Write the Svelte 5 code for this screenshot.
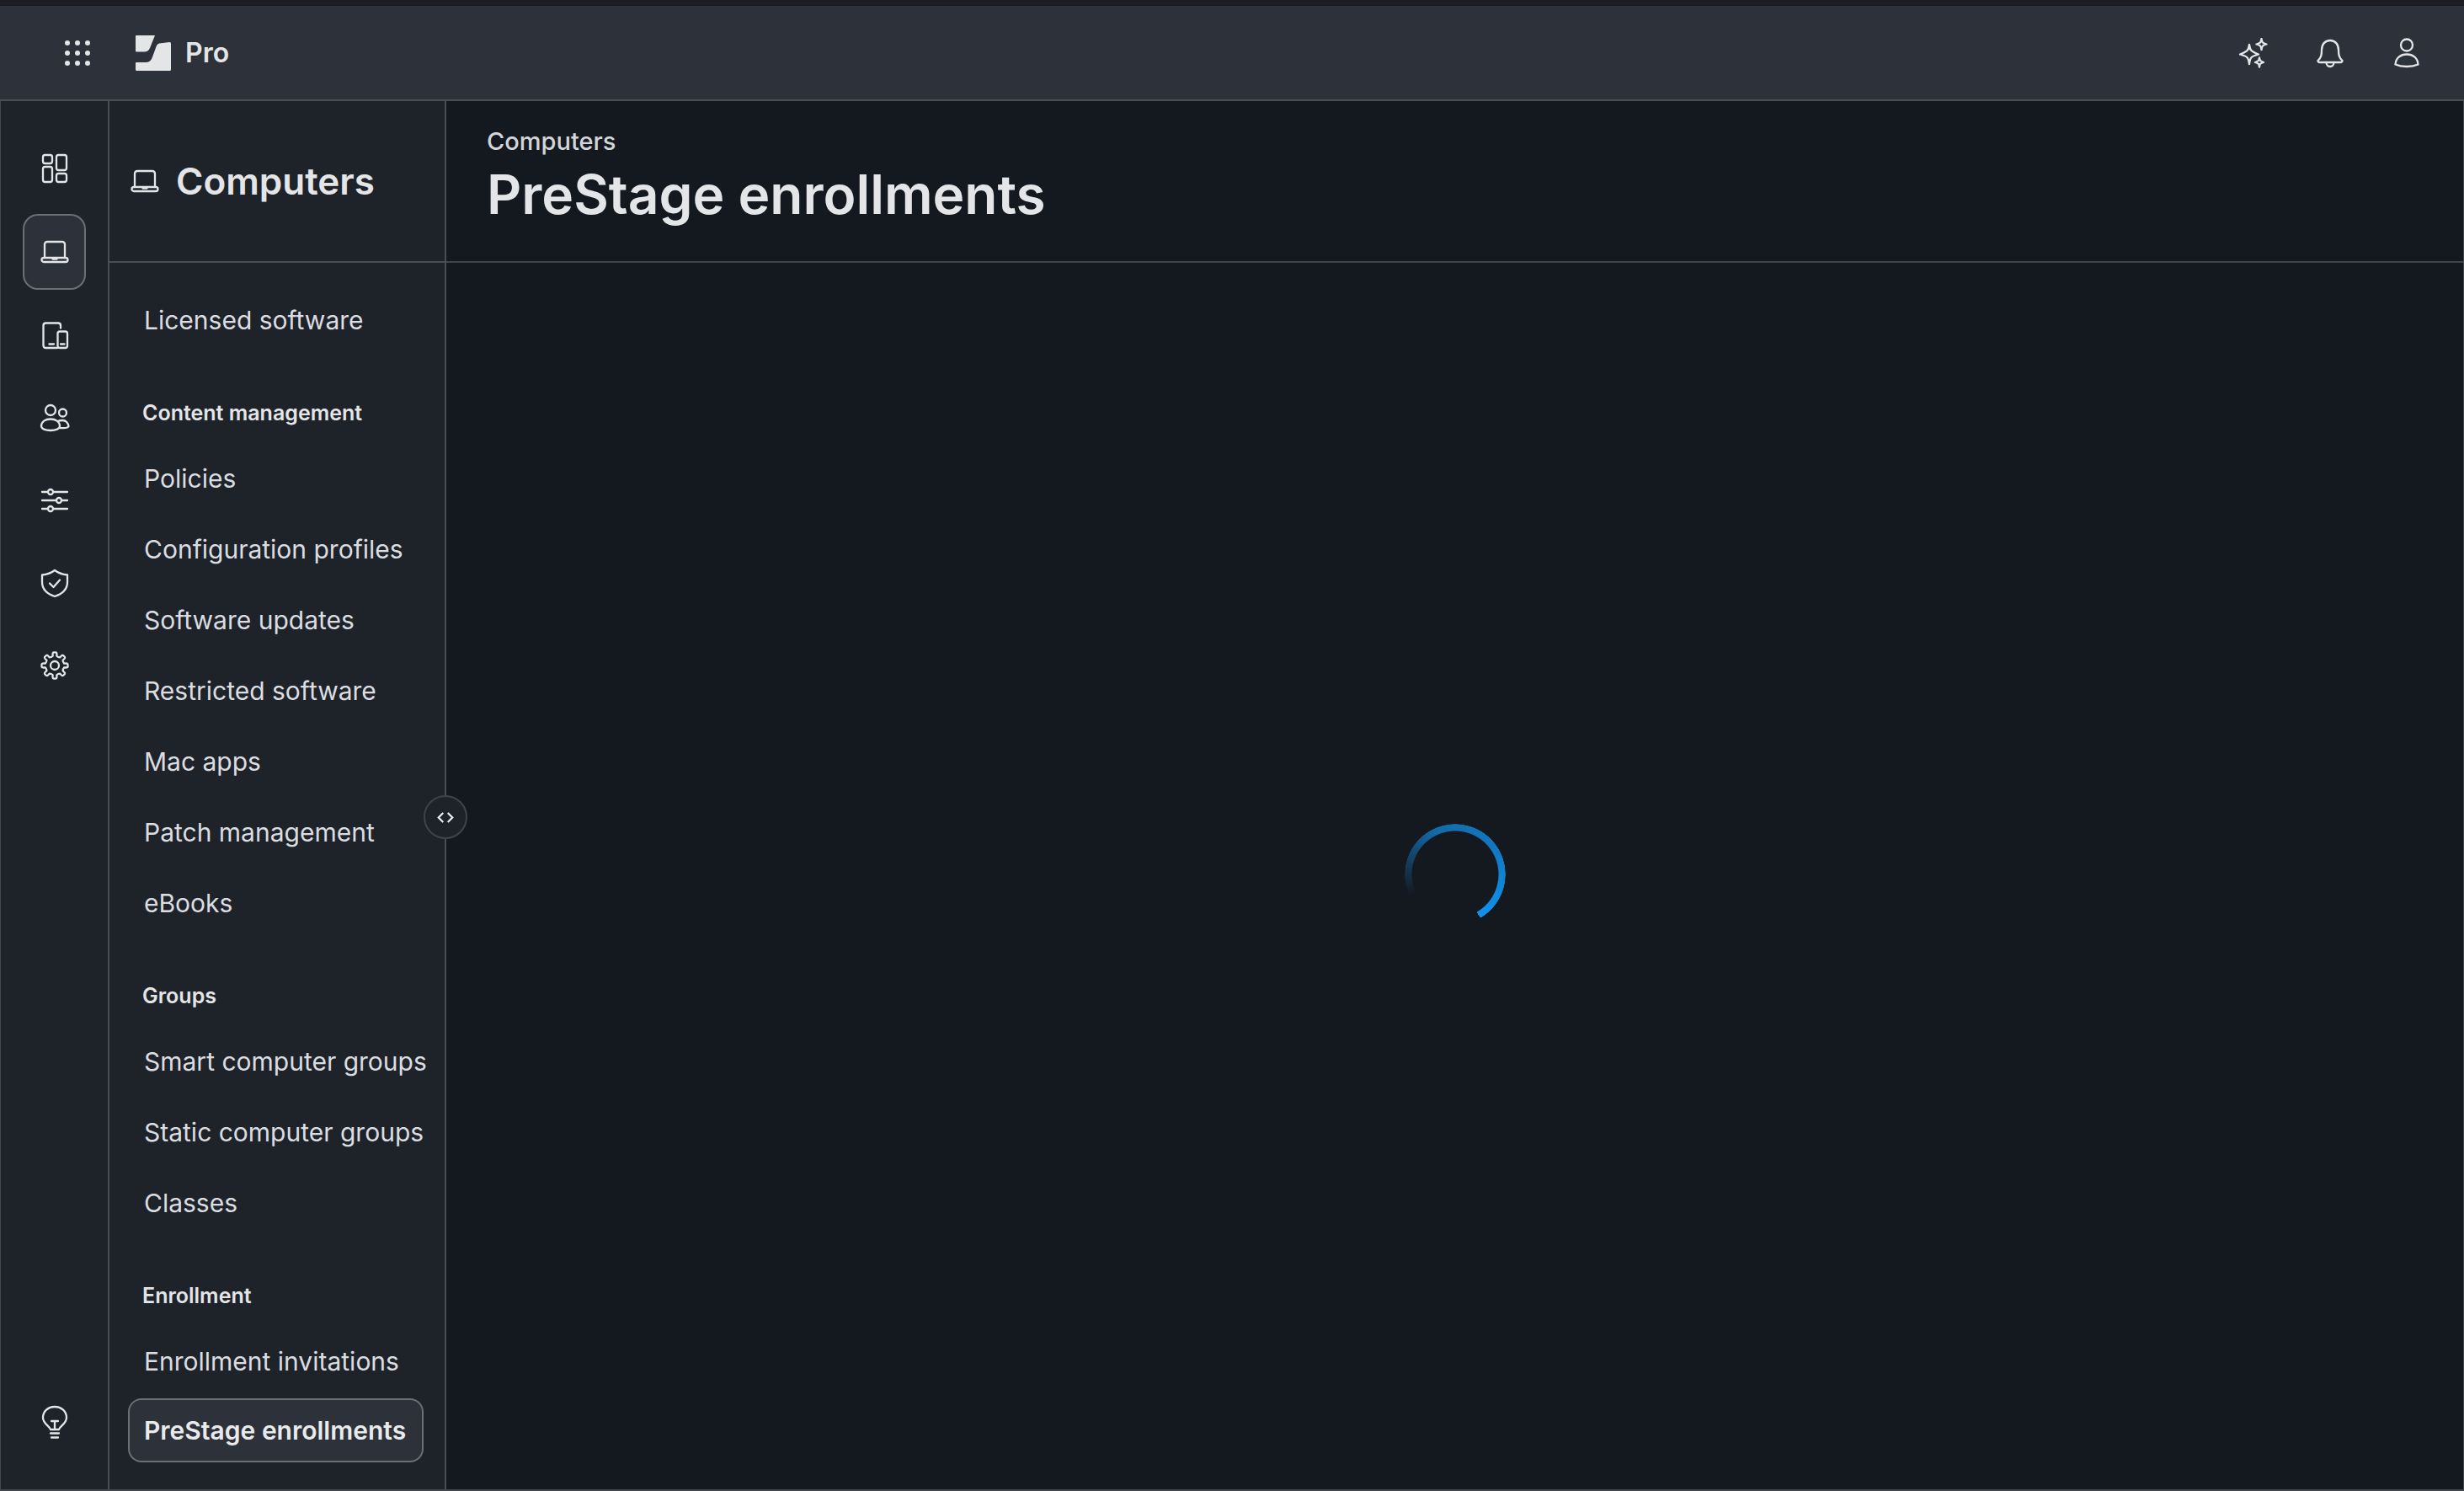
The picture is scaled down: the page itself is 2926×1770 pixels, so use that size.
<script lang="ts">
  const groups = [
    { items: ['Licensed software'] },
    { label: 'Content management', items: ['Policies', 'Configuration profiles', 'Software updates', 'Restricted software', 'Mac apps', 'Patch management', 'eBooks'] },
    { label: 'Groups', items: ['Smart computer groups', 'Static computer groups', 'Classes'] },
    { label: 'Enrollment', items: ['Enrollment invitations', 'PreStage enrollments'] },
  ];
  const active = 'PreStage enrollments';

  function gearPath(cx: number, cy: number, teeth: number, outer: number, inner: number) {
    const step = (Math.PI * 2) / teeth;
    const pt = (r: number, a: number) => `${(cx + r * Math.sin(a)).toFixed(2)} ${(cy - r * Math.cos(a)).toFixed(2)}`;
    let d = '';
    for (let i = 0; i < teeth; i++) {
      const a = i * step;
      d += `${i ? 'L' : 'M'} ${pt(inner, a - step * 0.26)} `;
      d += `Q ${pt(outer + 1.2, a - step * 0.24)} ${pt(outer, a)} Q ${pt(outer + 1.2, a + step * 0.24)} ${pt(inner, a + step * 0.26)} `;
      d += `Q ${pt(inner - 1, a + step * 0.5)} ${pt(inner, a + step * 0.74)} `;
    }
    return d + 'Z';
  }
</script>

{#snippet laptop()}
  <svg class="icon" viewBox="0 0 36 36">
    <path d="M6 25V9a3 3 0 0 1 3-3h18a3 3 0 0 1 3 3v16" />
    <rect x="2.5" y="25" width="31" height="5" rx="2.5" />
    <path d="M15.5 26.5h5" />
  </svg>
{/snippet}

<div class="app">
  <div class="strip"></div>
  <header class="topbar">
    <svg class="dots" viewBox="0 0 36 36" fill="currentColor">
      {#each [6, 18, 30] as y}
        {#each [6, 18, 30] as x}
          <circle cx={x} cy={y} r="3" />
        {/each}
      {/each}
    </svg>
    <svg class="logo" viewBox="0 0 42 42" fill="currentColor">
      <path d="M1 0H23L17 15Q15.500 19 11 19.500H1Q0 19.500 0 18.500V1Q0 0 1 0Z" />
      <path d="M28 9.500L40.500 8Q42 8 42 9.500V40.500Q42 42 40.500 42H1.500Q0 42 0 40.500V33Q0 32 1 32H12Q17.500 32 19.500 27L25 12Q26 10 28 9.500Z" />
    </svg>
    <span class="product">Pro</span>
    <div class="top-actions">
      <svg class="icon" viewBox="0 0 36 36">
        <path d="M13 8C14 15 15 16 24 19.500C15 22 14 23 13 31C12 23 11 22 2 19.500C11 16 12 15 13 8Z" />
        <path d="M27.500 1C28 5.500 29 6.500 33.500 7.500C29 8.500 28 9.500 27.500 14C27 9.500 26 8.500 21.500 7.500C26 6.500 27 5.500 27.500 1Z" />
        <path d="M25 23.500C25.500 27 26 27.500 30 29C26 30 25.500 31 25 34.500C24.500 31 24 30 20 29C24 27.500 24.500 27 25 23.500Z" />
      </svg>
      <svg class="icon" viewBox="0 0 36 36">
        <path d="M3.500 27C7.500 23 8 20 8 14.500C8 7.500 12 3 18 3C24 3 28 7.500 28 14.500C28 20 28.500 23 32.500 27C32.500 28 31.500 29 30 29H6C4.500 29 3.500 28 3.500 27Z" />
        <path d="M13.500 29C13.500 32 15.500 34 18 34C20.500 34 22.500 32 22.500 29" />
      </svg>
      <svg class="icon" viewBox="0 0 36 36">
        <circle cx="18" cy="8.500" r="7" />
        <path d="M4.500 31.500C5 24 10.500 19.500 18 19.500C25.500 19.500 31 24 31.500 31.500C27 33.500 23 34 18 34C13 34 9 33.500 4.500 31.500Z" />
      </svg>
    </div>
  </header>

  <div class="body">
    <nav class="rail">
      <svg class="icon" viewBox="0 0 36 36">
        <rect x="4" y="2" width="11" height="10" rx="2.500" />
        <rect x="4" y="16" width="11" height="18" rx="2.500" />
        <rect x="20" y="2" width="12" height="18" rx="2.500" />
        <rect x="20" y="24" width="12" height="10" rx="2.500" />
      </svg>
      <div class="rail-active">{@render laptop()}</div>
      <svg class="icon" viewBox="0 0 36 36">
        <path d="M25 9.500V6.500Q25 3.500 22 3.500H7.500Q4.500 3.500 4.500 6.500V30Q4.500 33 7.500 33H21" />
        <rect x="21.500" y="13.500" width="11.500" height="19.500" rx="2.500" />
        <path d="M11.500 28.500H17M25 28.500H29.500" />
      </svg>
      <svg class="icon" viewBox="0 0 36 36">
        <circle cx="13" cy="9" r="6" />
        <circle cx="27.500" cy="12" r="4.500" />
        <path d="M2 28C2 22.500 7 19.500 13 19.500C19 19.500 24 22.500 24 28C24 31 19 33 13 33C7 33 2 31 2 28Z" />
        <path d="M22 22C23.500 21 25.500 21 27.500 21C31 21 34 24 34.500 28C34 30 30 30.500 24 30" />
      </svg>
      <svg class="icon sliders" viewBox="0 0 36 36">
        <path d="M3 8H33M3 18H33M3 28H33" />
        <circle cx="13" cy="8" r="3" />
        <circle cx="23" cy="18" r="3" />
        <circle cx="13" cy="28" r="3" />
      </svg>
      <svg class="icon" viewBox="0 0 36 36">
        <path d="M18 3C22 6 27 8 33 8.500V17C33 25 27 31 18 34C9 31 3 25 3 17V8.500C9 8 14 6 18 3Z" />
        <path d="M12 18.500L16.500 23L24 14.500" />
      </svg>
      <svg class="icon" viewBox="0 0 36 36">
        <path d={gearPath(18, 18, 8, 15.5, 11.5)} />
        <circle cx="18" cy="18" r="5" />
      </svg>
      <svg class="icon bulb" viewBox="0 0 36 42">
        <path d="M13 29C12 25 4 22 4 15C4 7.500 10 2 18 2C26 2 32 7.500 32 15C32 22 24 25 23 29Z" />
        <path d="M14 19H22M18 19V29M13 33.500H23M14 38.500H22" />
      </svg>
    </nav>

    <aside class="panel">
      <div class="panel-head">
        {@render laptop()}
        <h2>Computers</h2>
      </div>
      <div class="panel-nav">
        {#each groups as group}
          {#if group.label}
            <div class="group-label">{group.label}</div>
          {/if}
          {#each group.items as item}
            <a class="item" class:active={item === active} href="#top">{item}</a>
          {/each}
        {/each}
      </div>
      <button class="collapse" type="button" aria-label="Collapse">
        <svg viewBox="0 0 24 16"><path d="M9 2L3 8L9 14M15 2L21 8L15 14" /></svg>
      </button>
    </aside>

    <main class="content">
      <div class="content-head">
        <div class="crumb">Computers</div>
        <h1>PreStage enrollments</h1>
      </div>
      <div class="loading">
        <div class="spinner"><i></i></div>
      </div>
    </main>
  </div>
</div>

<style>
  :global(body) { margin: 0; background: #141920; }
  .app {
    width: 2926px;
    height: 1770px;
    display: flex;
    flex-direction: column;
    overflow: hidden;
    color: #e4e5e7;
    font-family: Inter, "Liberation Sans", sans-serif;
  }
  .strip { height: 7px; flex: none; background: #1c1c23; }
  .topbar {
    flex: none;
    height: 113px;
    display: flex;
    align-items: center;
    box-sizing: border-box;
    padding: 0 50px 0 74px;
    background: #2d3139;
    border-bottom: 2px solid #4a4d53;
  }
  .icon {
    width: 36px;
    height: 36px;
    flex: none;
    fill: none;
    stroke: #e4e5e7;
    stroke-width: 2.3;
    stroke-linecap: round;
    stroke-linejoin: round;
  }
  .dots { width: 36px; height: 36px; margin-right: 51px; color: #e4e5e7; }
  .logo { width: 42px; height: 42px; color: #e4e5e7; margin-right: 17px; }
  .product { font-size: 32px; font-weight: 600; }
  .top-actions { margin-left: auto; display: flex; align-items: center; gap: 55px; }
  .body { flex: 1; min-height: 0; display: flex; border-bottom: 2px solid #44474d; border-left: 1px solid #44474d; border-right: 1px solid #44474d; }
  .rail {
    flex: none;
    width: 129px;
    box-sizing: border-box;
    display: flex;
    flex-direction: column;
    align-items: center;
    padding: 62px 0 0;
    background: #1e232a;
    border-right: 2px solid #4a4d53;
    gap: 62px;
  }
  .rail-active {
    width: 75px;
    height: 90px;
    margin: -26px 0;
    box-sizing: border-box;
    display: flex;
    align-items: center;
    justify-content: center;
    background: #2d3139;
    border: 2px solid #6b6f76;
    border-radius: 18px;
  }
  .sliders circle { fill: #1e232a; }
  .bulb { height: 42px; margin-top: auto; margin-bottom: 58px; }
  .panel {
    position: relative;
    flex: none;
    width: 400px;
    box-sizing: border-box;
    background: #1e232a;
    border-right: 2px solid #4a4d53;
    display: flex;
    flex-direction: column;
  }
  .panel-head {
    flex: none;
    height: 192px;
    box-sizing: border-box;
    display: flex;
    align-items: center;
    gap: 19px;
    padding: 0 0 0 24px;
    border-bottom: 2px solid #4a4d53;
  }
  .panel-head h2 { margin: 0; font-size: 44px; font-weight: 600; line-height: 1; }
  .panel-nav { flex: 1; min-height: 0; overflow: hidden; padding: 26px 0 0 22px; }
  .item {
    display: block;
    height: 84px;
    line-height: 84px;
    padding-left: 19px;
    font-size: 30px;
    font-weight: 400;
    color: #dcdde0;
    text-decoration: none;
    white-space: nowrap;
  }
  .item.active {
    box-sizing: border-box;
    width: 351px;
    height: 76px;
    line-height: 72px;
    margin-top: 2px;
    padding-left: 17px;
    font-weight: 600;
    color: #e9eaec;
    background: #2d3139;
    border: 2px solid #6b6f76;
    border-radius: 16px;
  }
  .group-label {
    height: 40px;
    line-height: 40px;
    margin: 48px 0 16px;
    padding-left: 17px;
    font-size: 25px;
    font-weight: 600;
    color: #e4e5e7;
  }
  .collapse {
    position: absolute;
    top: 824px;
    right: -27px;
    width: 52px;
    height: 52px;
    padding: 0;
    display: flex;
    align-items: center;
    justify-content: center;
    background: #1e232a;
    border: 2px solid #3f434a;
    border-radius: 50%;
  }
  .collapse svg { width: 22px; height: 15px; fill: none; stroke: #f0f1f2; stroke-width: 2.4; }
  .content { flex: 1; min-width: 0; display: flex; flex-direction: column; background: #141920; }
  .content-head {
    flex: none;
    height: 192px;
    box-sizing: border-box;
    padding: 30px 0 0 48px;
    border-bottom: 2px solid #3f434a;
  }
  .crumb { font-size: 29px; font-weight: 500; line-height: 36px; color: #d4d5d8; }
  h1 { margin: 6px 0 0; font-size: 64px; font-weight: 600; line-height: 78px; color: #e4e5e7; }
  .loading { flex: 1; display: flex; align-items: center; justify-content: center; padding-bottom: 4px; }
  .spinner {
    position: relative;
    width: 120px;
    height: 120px;
    border-radius: 50%;
    background: conic-gradient(from 244deg, rgb(10 120 200 / 0) 0deg, #1569a8 90deg, #1277c0 170deg, #0f92ee 266deg, transparent 266deg);
    -webkit-mask: radial-gradient(circle, transparent 51px, #000 52px, #000 59.500px, transparent 60px);
    mask: radial-gradient(circle, transparent 51px, #000 52px, #000 59.500px, transparent 60px);
  }
  .spinner i { display: none; }
</style>
